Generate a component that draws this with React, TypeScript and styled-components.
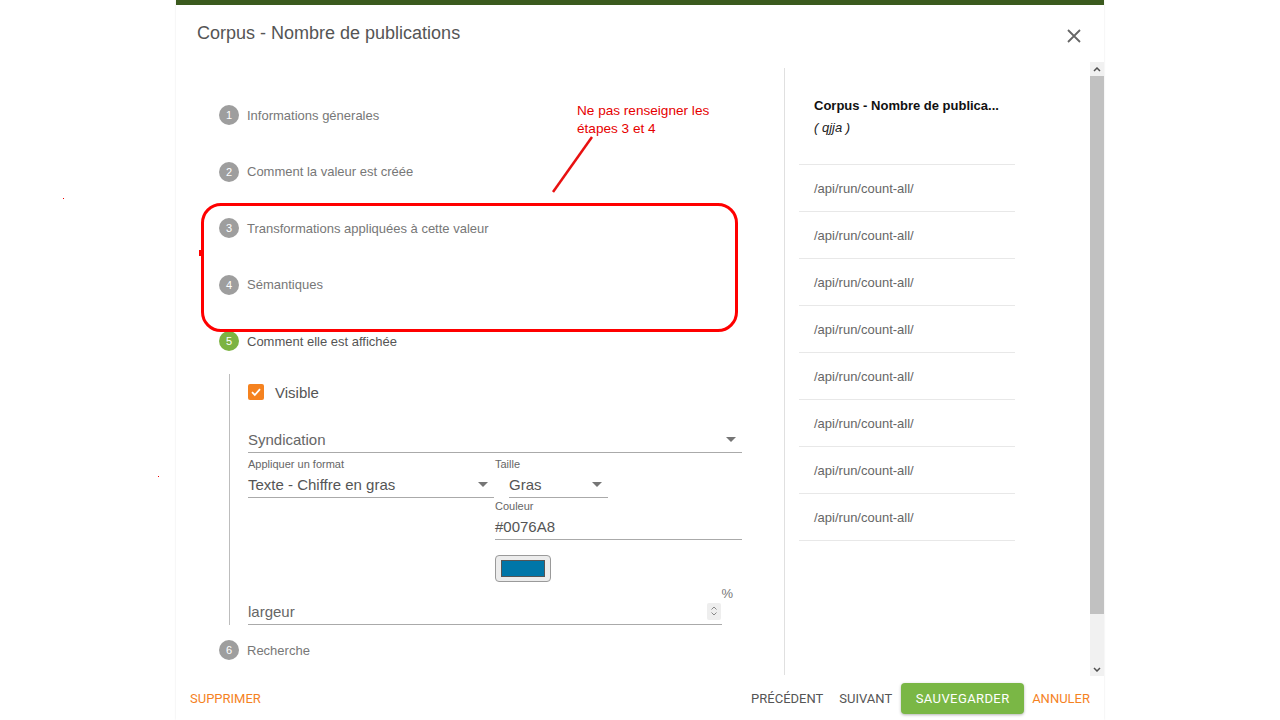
import React from 'react';
import styled, { createGlobalStyle } from 'styled-components';

const GlobalStyle = createGlobalStyle`
  html, body {
    margin: 0;
    padding: 0;
    background: #fff;
  }
  body {
    font-family: "Liberation Sans", Arial, sans-serif;
  }
  * {
    box-sizing: border-box;
  }
`;

const ORANGE = '#f5821f';
const GREEN = '#7ab745';

const Page = styled.div`
  position: relative;
  width: 1280px;
  height: 720px;
  overflow: hidden;
  background: #fff;
`;

const Modal = styled.div`
  margin-left: 176px;
  width: 928px;
  height: 720px;
  display: flex;
  flex-direction: column;
  border-top: 5px solid #3b5a1e;
  background: #fff;
  box-shadow: 0 0 2px rgba(0, 0, 0, 0.1);
`;

const Header = styled.header`
  height: 57px;
  display: flex;
  align-items: center;
  justify-content: space-between;
  padding: 0 23px 0 21px;
`;

const Title = styled.h2`
  margin: 0;
  font-size: 18px;
  font-weight: normal;
  color: #555;
`;

const CloseButton = styled.button`
  border: 0;
  background: none;
  padding: 0;
  width: 14px;
  height: 14px;
  margin-top: 4px;
  display: flex;
  cursor: pointer;
`;

const Body = styled.div`
  height: 614px;
  display: flex;
`;

const LeftPane = styled.div`
  width: 608px;
  padding: 41px 0 0 43px;
`;

const StepHeader = styled.div`
  display: flex;
  align-items: center;
  gap: 8px;
  height: 24px;
`;

const StepIcon = styled.span<{ $active?: boolean }>`
  width: 20px;
  height: 20px;
  border-radius: 50%;
  background: ${({ $active }) => ($active ? '#7cb342' : '#9e9e9e')};
  color: #fff;
  font-size: 11px;
  display: flex;
  align-items: center;
  justify-content: center;
`;

const StepLabel = styled.span<{ $active?: boolean }>`
  font-size: 13px;
  color: ${({ $active }) => ($active ? '#555' : '#777')};
`;

const StepSpacer = styled.div`
  height: 32.5px;
`;

const StepContent = styled.div`
  margin: 21px 0 13px 10px;
  border-left: 1px solid #bdbdbd;
  padding-left: 18px;
  width: 513px;
`;

const CheckRow = styled.label`
  height: 36px;
  display: flex;
  align-items: center;
  gap: 11px;
  font-size: 15px;
  color: #555;
`;

const CheckBox = styled.span`
  width: 16px;
  height: 16px;
  border-radius: 2px;
  background: ${ORANGE};
  display: flex;
  align-items: center;
  justify-content: center;
`;

const FieldLabel = styled.div<{ $align?: string }>`
  font-size: 11px;
  line-height: 14px;
  height: 14px;
  color: #666;
  text-align: ${({ $align }) => $align || 'left'};
`;

const FieldValue = styled.div<{ $width: number }>`
  width: ${({ $width }) => $width}px;
  height: 27px;
  border-bottom: 1px solid #aaa;
  display: flex;
  align-items: center;
  justify-content: space-between;
  font-size: 15px;
  color: #555;
  padding-right: 6px;
`;

const Placeholder = styled.span`
  color: #666;
`;

const Caret = styled.span`
  width: 0;
  height: 0;
  border-left: 5px solid transparent;
  border-right: 5px solid transparent;
  border-top: 5px solid #757575;
`;

const SyndicationField = styled.div`
  margin-top: 16px;
`;

const FormatRow = styled.div`
  display: flex;
  margin-top: 4px;
`;

const SizeColumn = styled.div`
  margin-left: 1px;
`;

const SizeSelect = styled.div`
  margin-left: 14px;
`;

const ColorBlock = styled.div`
  margin-left: 247px;
  margin-top: 1px;
`;

const ColorButton = styled.button`
  display: block;
  margin: 15px 0 0 247px;
  width: 56px;
  height: 27px;
  padding: 4px 5px;
  border: 1px solid #9a9a9a;
  border-radius: 4px;
  background: #ececec;
`;

const Swatch = styled.span<{ $color: string }>`
  display: block;
  width: 100%;
  height: 100%;
  background: ${({ $color }) => $color};
  border: 1px solid #555;
`;

const WidthField = styled.div`
  margin-top: 2px;
  width: 485px;
`;

const UnitLabel = styled(FieldLabel)`
  font-size: 13px;
  line-height: 20px;
  color: #777;
`;

const Spinner = styled.span`
  width: 14px;
  height: 17px;
  background: #eee;
  border-radius: 2px;
  display: flex;
  align-items: center;
  justify-content: center;
  margin-right: -5px;
`;

const RightPane = styled.div`
  flex: 1;
  margin: 6px 0 1px;
  border-left: 1px solid #e0e0e0;
  padding-left: 14px;
`;

const List = styled.div`
  width: 216px;
`;

const ListHeader = styled.div`
  padding: 30px 14px 28px 15px;
  border-bottom: 1px solid #e8e8e8;
`;

const ListTitle = styled.div`
  font-size: 13px;
  font-weight: bold;
  line-height: 16px;
  color: #111;
  white-space: nowrap;
`;

const ListSub = styled.div`
  margin-top: 6px;
  font-size: 13px;
  font-style: italic;
  line-height: 16px;
  color: #222;
`;

const ListItem = styled.div`
  height: 47px;
  display: flex;
  align-items: center;
  padding: 0 14px 0 15px;
  border-bottom: 1px solid #e8e8e8;
  font-size: 13px;
  color: #666;
`;

const ScrollTrack = styled.div`
  width: 14px;
  height: 100%;
  background: #f1f1f1;
  display: flex;
  flex-direction: column;
`;

const ScrollArrow = styled.div`
  height: 14px;
  display: flex;
  align-items: center;
  justify-content: center;
`;

const ScrollThumb = styled.div`
  height: 538px;
  background: #c1c1c1;
`;

const ScrollRest = styled.div`
  flex: 1;
`;

const Footer = styled.footer`
  height: 44px;
  display: flex;
  align-items: center;
  justify-content: space-between;
  padding: 0 6px;
`;

const Actions = styled.div`
  display: flex;
  align-items: center;
`;

const TextButton = styled.button<{ $color?: string }>`
  border: 0;
  background: none;
  padding: 0 8px;
  height: 31px;
  font-family: Roboto, "Liberation Sans", sans-serif;
  font-size: 13px;
  text-transform: uppercase;
  color: ${({ $color }) => $color || '#555'};
  cursor: pointer;
`;

const PrimaryButton = styled.button`
  border: 0;
  height: 31px;
  width: 123px;
  margin-left: 1px;
  border-radius: 4px;
  background: ${GREEN};
  color: #fff;
  font-family: Roboto, "Liberation Sans", sans-serif;
  font-size: 13px;
  letter-spacing: 0.4px;
  box-shadow: 0 1px 3px rgba(0, 0, 0, 0.3);
  cursor: pointer;
`;

/* annotation drawn over the screenshot */
const Callout = styled.div`
  position: absolute;
  left: 201px;
  top: 203px;
  width: 537px;
  height: 129px;
  border: 3px solid #ff0000;
  border-radius: 20px;
  pointer-events: none;
`;

const CalloutNub = styled.span`
  position: absolute;
  left: -5px;
  top: 44px;
  width: 3px;
  height: 6px;
  background: #ff0000;
`;

const CalloutNote = styled.div`
  position: absolute;
  left: 577px;
  top: 102px;
  font-size: 13.6px;
  line-height: 18px;
  color: #e60000;
`;

const CalloutLine = styled.svg`
  position: absolute;
  left: 550px;
  top: 134px;
`;

const Speck = styled.span<{ $x: number; $y: number }>`
  position: absolute;
  left: ${({ $x }) => $x}px;
  top: ${({ $y }) => $y}px;
  width: 1px;
  height: 1px;
  background: #e00;
`;

const steps = [
  'Informations génerales',
  'Comment la valeur est créée',
  'Transformations appliquées à cette valeur',
  'Sémantiques',
];

const routes = Array.from({ length: 8 }, () => '/api/run/count-all/');

const Step = ({ n, label, active }: { n: number; label: string; active?: boolean }) => (
  <StepHeader>
    <StepIcon $active={active}>{n}</StepIcon>
    <StepLabel $active={active}>{label}</StepLabel>
  </StepHeader>
);

const Chevron = ({ up }: { up?: boolean }) => (
  <svg width="8" height="5" viewBox="0 0 8 5">
    <path d={up ? 'M1 4 L4 1 L7 4' : 'M1 1 L4 4 L7 1'} fill="none" stroke="#505050" strokeWidth="1.5" />
  </svg>
);

export default function App() {
  return (
    <Page>
      <GlobalStyle />
      <Modal>
        <Header>
          <Title>Corpus - Nombre de publications</Title>
          <CloseButton aria-label="Fermer">
            <svg width="14" height="14" viewBox="0 0 14 14">
              <path d="M1 1 L13 13 M13 1 L1 13" stroke="#666" strokeWidth="1.8" />
            </svg>
          </CloseButton>
        </Header>

        <Body>
          <LeftPane>
            {steps.map((s, i) => (
              <React.Fragment key={s}>
                <Step n={i + 1} label={s} />
                <StepSpacer />
              </React.Fragment>
            ))}
            <Step n={5} label="Comment elle est affichée" active />
            <StepContent>
              <CheckRow>
                <CheckBox>
                  <svg width="12" height="12" viewBox="0 0 12 12">
                    <path d="M2 6.2 L4.8 9 L10 3.2" fill="none" stroke="#fff" strokeWidth="1.8" />
                  </svg>
                </CheckBox>
                Visible
              </CheckRow>

              <SyndicationField>
                <FieldValue $width={494}>
                  <Placeholder>Syndication</Placeholder>
                  <Caret />
                </FieldValue>
              </SyndicationField>

              <FormatRow>
                <div>
                  <FieldLabel>Appliquer un format</FieldLabel>
                  <FieldValue $width={246}>
                    Texte - Chiffre en gras
                    <Caret />
                  </FieldValue>
                </div>
                <SizeColumn>
                  <FieldLabel>Taille</FieldLabel>
                  <SizeSelect>
                    <FieldValue $width={99}>
                      Gras
                      <Caret />
                    </FieldValue>
                  </SizeSelect>
                </SizeColumn>
              </FormatRow>

              <ColorBlock>
                <FieldLabel>Couleur</FieldLabel>
                <FieldValue $width={247}>#0076A8</FieldValue>
              </ColorBlock>
              <ColorButton aria-label="Choisir la couleur">
                <Swatch $color="#0076A8" />
              </ColorButton>

              <WidthField>
                <UnitLabel $align="right">%</UnitLabel>
                <FieldValue $width={474}>
                  <Placeholder>largeur</Placeholder>
                  <Spinner>
                    <svg width="8" height="12" viewBox="0 0 8 12">
                      <path d="M1.5 4.5 L4 2 L6.5 4.5 M1.5 7.5 L4 10 L6.5 7.5" fill="none" stroke="#888" strokeWidth="1" />
                    </svg>
                  </Spinner>
                </FieldValue>
              </WidthField>
            </StepContent>
            <Step n={6} label="Recherche" />
          </LeftPane>

          <RightPane>
            <List>
              <ListHeader>
                <ListTitle>Corpus - Nombre de publica...</ListTitle>
                <ListSub>( qjja )</ListSub>
              </ListHeader>
              {routes.map((r, i) => (
                <ListItem key={i}>{r}</ListItem>
              ))}
            </List>
          </RightPane>

          <ScrollTrack>
            <ScrollArrow>
              <Chevron up />
            </ScrollArrow>
            <ScrollThumb />
            <ScrollRest />
            <ScrollArrow>
              <Chevron />
            </ScrollArrow>
          </ScrollTrack>
        </Body>

        <Footer>
          <TextButton $color={ORANGE}>Supprimer</TextButton>
          <Actions>
            <TextButton>Précédent</TextButton>
            <TextButton>Suivant</TextButton>
            <PrimaryButton>SAUVEGARDER</PrimaryButton>
            <TextButton $color={ORANGE}>Annuler</TextButton>
          </Actions>
        </Footer>
      </Modal>

      <Callout>
        <CalloutNub />
      </Callout>
      <CalloutNote>
        Ne pas renseigner les
        <br />
        étapes 3 et 4
      </CalloutNote>
      <CalloutLine width="46" height="62" viewBox="0 0 46 62">
        <path d="M3 58 L42 3" stroke="#e81010" strokeWidth="2.5" />
      </CalloutLine>
      <Speck $x={158} $y={476} />
      <Speck $x={63} $y={198} />
    </Page>
  );
}
